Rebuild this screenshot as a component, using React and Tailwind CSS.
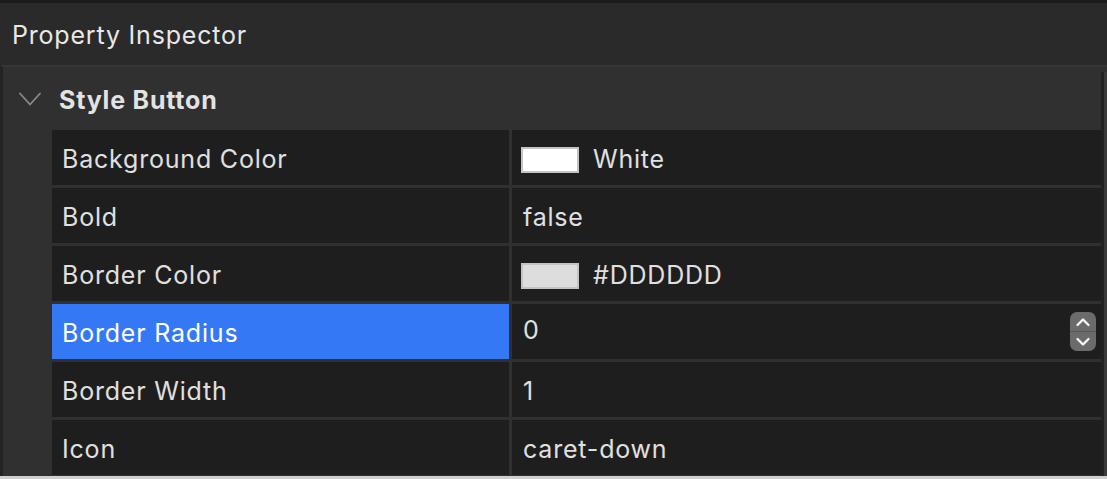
const rows = [
  { label: "Background Color", value: "White", swatch: "#ffffff" },
  { label: "Bold", value: "false" },
  { label: "Border Color", value: "#DDDDDD", swatch: "#dddddd" },
  { label: "Border Radius", value: "0", selected: true, stepper: true },
  { label: "Border Width", value: "1" },
  { label: "Icon", value: "caret-down" },
];

function Stepper() {
  return (
    <div className="flex flex-col w-[26px] h-[39px] rounded-[7px] bg-[#6b6b6b] overflow-hidden">
      <div className="flex-1 flex items-center justify-center border-b border-[#575757]">
        <svg width="16" height="10" viewBox="0 0 16 10" fill="none">
          <path d="M2.5 8L8 2.5L13.5 8" stroke="#f4f4f4" strokeWidth="2.4" strokeLinecap="round" strokeLinejoin="round" />
        </svg>
      </div>
      <div className="flex-1 flex items-center justify-center">
        <svg width="16" height="10" viewBox="0 0 16 10" fill="none">
          <path d="M2.5 2L8 7.5L13.5 2" stroke="#f4f4f4" strokeWidth="2.4" strokeLinecap="round" strokeLinejoin="round" />
        </svg>
      </div>
    </div>
  );
}

function Row({ row }) {
  return (
    <div className="flex h-[55px] gap-[3px]">
      <div
        className={`w-[457px] flex items-center pl-[10px] pt-[4px] ${
          row.selected ? "bg-[#3478f6] text-white" : "bg-[#1e1e1e] text-[#e0e0e0]"
        }`}
      >
        {row.label}
      </div>
      <div
        className={`flex-1 bg-[#1e1e1e] text-[#e0e0e0] flex pl-[9px] pr-[5px] ${
          row.stepper ? "items-start pt-[8px] justify-between" : "items-center pt-[4px]"
        }`}
      >
        <div className="flex items-center">
          {row.swatch && (
            <span
              className="w-[58px] h-[26px] mr-[14px] border-2 border-[#c4c4c4]"
              style={{ backgroundColor: row.swatch }}
            />
          )}
          <span className={row.swatch ? "" : "pl-[2px]"}>{row.value}</span>
        </div>
        {row.stepper && <Stepper />}
      </div>
    </div>
  );
}

export default function App() {
  return (
    <div
      className="w-[1107px] h-[479px] overflow-hidden flex flex-col bg-[#1e1e1e] text-[25px] tracking-[0.8px]"
      style={{ fontFamily: "Inter, 'Noto Sans', sans-serif" }}
    >
      <div className="h-[3px] bg-[#1b1b1b]" />
      <div className="h-[62px] bg-[#2a2a2a] flex items-center px-[12px] pt-[4px] text-[#e8e8e8]">
        Property Inspector
      </div>
      <div className="relative flex-1 flex flex-col bg-[#303030] border-t-2 border-[#363636] border-l-[3px] border-l-[#232323]">
        <div className="h-[63px] flex items-center pt-[4px] text-[#e3e3e3]">
          <svg className="ml-[15px] mr-[17px] -mt-[4px]" width="24" height="16" viewBox="0 0 24 16" fill="none">
            <path d="M2 2.5L12 13.5L22 2.5" stroke="#8a8a8a" strokeWidth="1.8" strokeLinecap="round" strokeLinejoin="round" />
          </svg>
          <span className="font-bold">Style Button</span>
        </div>
        <div className="flex flex-col gap-[3px] pl-[49px] pr-[6px]">
          {rows.map((r) => (
            <Row key={r.label} row={r} />
          ))}
        </div>
        <div className="absolute right-0 top-[5px] bottom-0 w-[6px] flex">
          <div className="w-[3px] bg-[#222]" />
          <div className="w-[3px] bg-[#3a3a3a]" />
        </div>
      </div>
      <div className="h-[3px] bg-[#cfcfcf]" />
    </div>
  );
}
